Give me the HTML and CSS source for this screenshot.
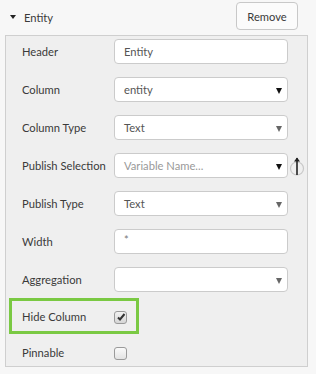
FILE: index.html
```html
<!DOCTYPE html>
<html>
<head>
<meta charset="utf-8">
<link rel="stylesheet" href="styles.css">
</head>
<body>
<div class="head">
  <div class="title"><span class="caret"></span>Entity</div>
  <button class="btn">Remove</button>
</div>
<div class="panel">
  <div class="row"><span class="label">Header</span><div class="field">Entity</div></div>
  <div class="row"><span class="label">Column</span><div class="field select">entity<span class="arr dark"></span></div></div>
  <div class="row"><span class="label">Column Type</span><div class="field select">Text<span class="arr"></span></div></div>
  <div class="row"><span class="label">Publish Selection</span><div class="field select ph">Variable Name...<span class="arr dark"></span></div>
    <svg class="pub" width="16" height="22" viewBox="0 0 16 22"><circle cx="8" cy="13.5" r="6.5" fill="none" stroke="#c8c8c8" stroke-width="1.2"/><path d="M8 20V3" stroke="#222" stroke-width="1.6"/><path d="M5 6.5L8 2.5L11 6.5Z" fill="#222"/></svg>
  </div>
  <div class="row"><span class="label">Publish Type</span><div class="field select">Text<span class="arr"></span></div></div>
  <div class="row"><span class="label">Width</span><div class="field star">*</div></div>
  <div class="row"><span class="label">Aggregation</span><div class="field select"><span class="arr"></span></div></div>
  <div class="hl"><span class="label">Hide Column</span><span class="cb checked"><svg width="10" height="10" viewBox="0 0 10 10"><path d="M2 5.5L4 7.5L8.5 2" fill="none" stroke="#333" stroke-width="2"/></svg></span></div>
  <div class="last"><span class="label">Pinnable</span><span class="cb"></span></div>
</div>
</body>
</html>
```
FILE: styles.css
```css
html, body { margin: 0; padding: 0; }
body {
  background: #f7f7f7;
  font-family: Lato, "Open Sans", sans-serif;
  font-size: 11.2px;
  color: #3a3a3a;
  width: 316px;
  height: 374px;
  overflow: hidden;
}
.head {
  height: 35px;
  display: flex;
  align-items: center;
  justify-content: space-between;
  padding: 0 18px 0 10px;
  box-sizing: border-box;
}
.title { display: flex; align-items: center; }
.caret {
  width: 0; height: 0;
  border-left: 3px solid transparent;
  border-right: 3px solid transparent;
  border-top: 4px solid #222;
  margin-right: 8px;
  margin-top: -1px;
}
.btn {
  font: inherit;
  color: #3a3a3a;
  height: 28px;
  width: 62px;
  margin-top: -3px;
  background: #fbfbfb;
  border: 1px solid #c8c8c8;
  border-radius: 4px;
  padding: 0;
}
.panel {
  margin-left: 5px;
  width: 303px;
  height: 332px;
  box-sizing: border-box;
  background: #efefef;
  border: 1px solid #cfcfcf;
  padding-top: 3px;
}
.row {
  display: flex;
  align-items: center;
  height: 25px;
  margin-bottom: 13px;
  padding-left: 16px;
}
.label { width: 92px; flex: none; }
.field {
  width: 174px;
  height: 25px;
  box-sizing: border-box;
  background: #fff;
  border: 1px solid #cbcbcb;
  border-radius: 4px;
  padding-left: 9px;
  display: flex;
  align-items: center;
  color: #555;
  position: relative;
}
.field.ph { color: #999; }
.field.star { color: #777; font-size: 11px; padding-bottom: 4px; }
.arr {
  position: absolute;
  right: 5px;
  top: 10px;
  width: 0; height: 0;
  border-left: 3.5px solid transparent;
  border-right: 3.5px solid transparent;
  border-top: 6px solid #666;
}
.arr.dark { border-top-color: #111; }
.pub { margin-left: 1px; flex: none; }
.hl {
  margin-top: -7px;
  margin-left: 3px;
  width: 130px;
  height: 36px;
  box-sizing: border-box;
  border: 3px solid #7ac943;
  display: flex;
  align-items: center;
  padding-left: 10px;
}
.last {
  display: flex;
  align-items: center;
  height: 20px;
  margin-top: 8px;
  padding-left: 16px;
}
.cb {
  width: 13px; height: 13px;
  box-sizing: border-box;
  border: 1px solid #9a9a9a;
  border-radius: 3px;
  background: linear-gradient(#fafafa, #e3e3e3);
  display: flex;
  align-items: center;
  justify-content: center;
  margin-top: 2px;
}
.cb.checked { background: linear-gradient(#f2f2f2, #d6d6d6); }
```
